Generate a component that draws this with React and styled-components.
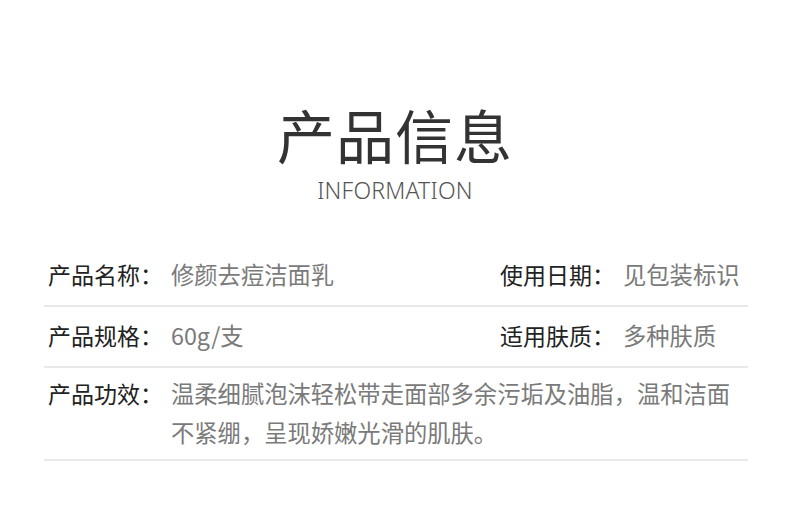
import React from 'react'
import styled, {createGlobalStyle} from 'styled-components'

const GlobalStyle = createGlobalStyle`
  body {
    margin: 0;
    background: #fff;
    font-family: 'Noto Sans CJK SC', 'Noto Sans', sans-serif;
  }
`

const Page = styled.div`
  width: 790px;
  height: 507px;
  overflow: hidden;
  background: #fff;
  padding-top: 100px;
  box-sizing: border-box;
`

const Heading = styled.header`
  display: flex;
  flex-direction: column;
  align-items: center;
`

const Title = styled.h1`
  margin: 0;
  font-size: 58px;
  line-height: 1.2;
  font-weight: 400;
  color: #333;
  letter-spacing: 1px;
`

const Subtitle = styled.div`
  margin-top: 9px;
  font-family: 'Noto Sans', sans-serif;
  font-size: 23px;
  line-height: 1;
  font-weight: 300;
  letter-spacing: 0.2px;
  color: #555;
`

const Table = styled.div`
  margin: 44px 0 0 44px;
  width: 704px;
`

const Row = styled.div`
  display: flex;
  padding: ${({multi}) => (multi ? '6px 10px 7px 4px' : '9px 10px 11px 4px')};
  border-bottom: 2px solid #e8e8e8;
`

const Cell = styled.div`
  display: flex;
  flex: ${({wide}) => (wide ? '1' : 'none')};
  width: ${({first}) => (first ? '452px' : 'auto')};
`

const Label = styled.span`
  flex: none;
  width: 123px;
  font-size: 23px;
  line-height: 39px;
  color: #222;
`

const Value = styled.span`
  flex: 1;
  font-size: 23.3px;
  line-height: 39px;
  color: #7a7a7a;
`

const App = () => (
  <Page>
    <GlobalStyle />
    <Heading>
      <Title>产品信息</Title>
      <Subtitle>INFORMATION</Subtitle>
    </Heading>
    <Table>
      <Row>
        <Cell first>
          <Label>产品名称：</Label>
          <Value>修颜去痘洁面乳</Value>
        </Cell>
        <Cell>
          <Label>使用日期：</Label>
          <Value>见包装标识</Value>
        </Cell>
      </Row>
      <Row>
        <Cell first>
          <Label>产品规格：</Label>
          <Value>60g/支</Value>
        </Cell>
        <Cell>
          <Label>适用肤质：</Label>
          <Value>多种肤质</Value>
        </Cell>
      </Row>
      <Row multi>
        <Cell wide>
          <Label>产品功效：</Label>
          <Value>温柔细腻泡沫轻松带走面部多余污垢及油脂，温和洁面不紧绷，呈现娇嫩光滑的肌肤。</Value>
        </Cell>
      </Row>
    </Table>
  </Page>
)

export default App
